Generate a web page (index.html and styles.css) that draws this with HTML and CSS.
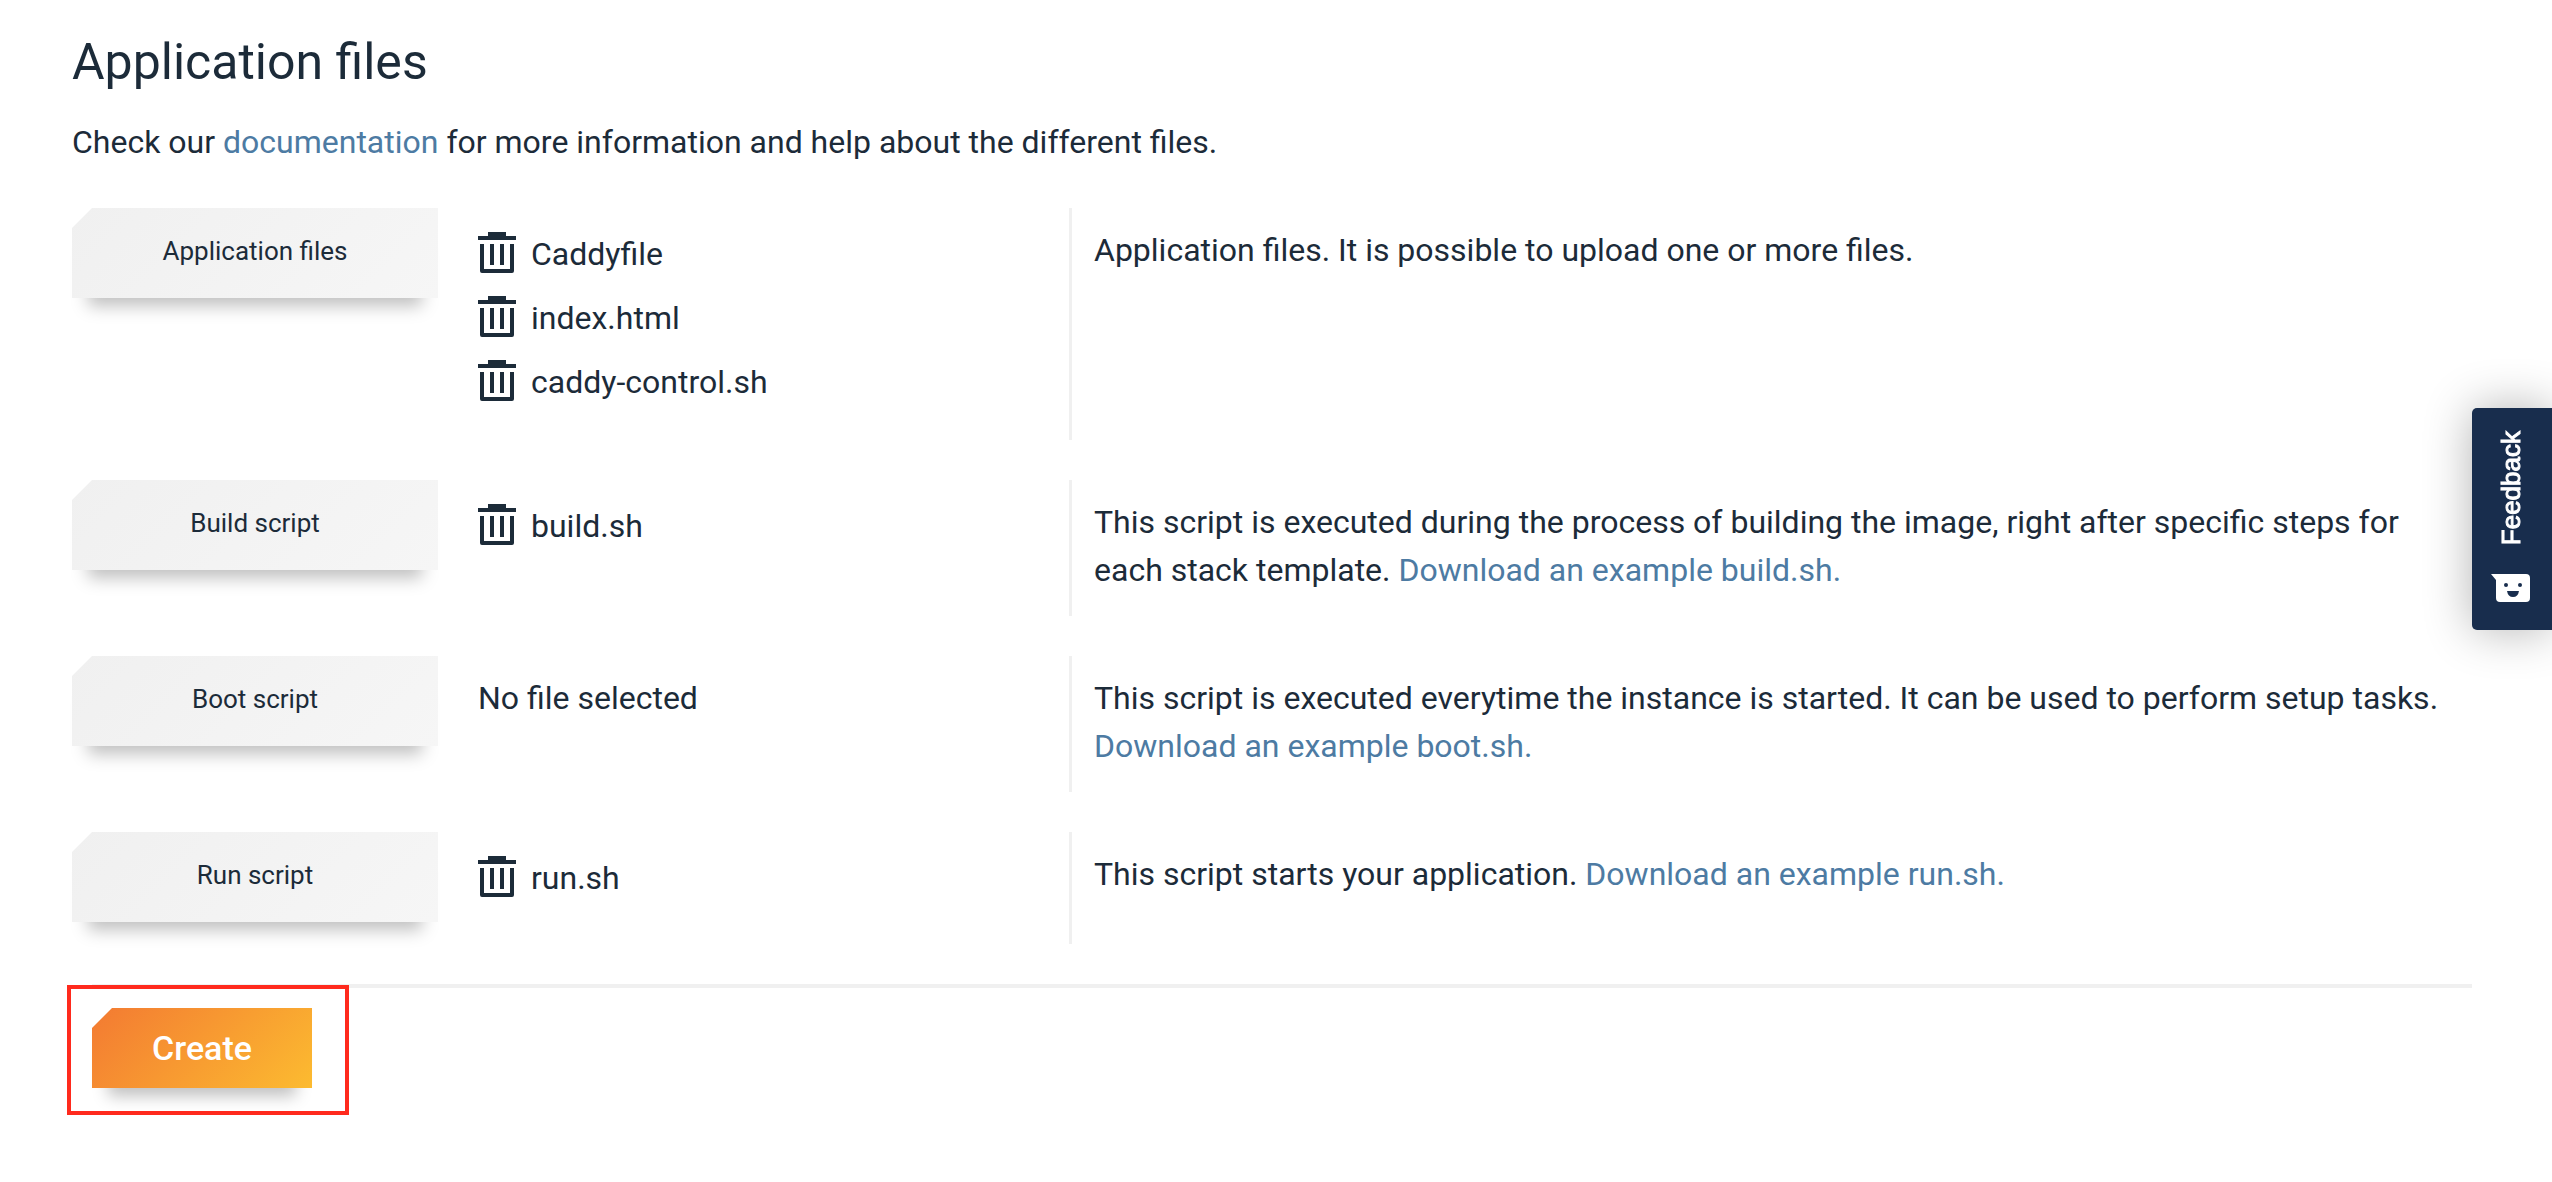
FILE: index.html
```html
<!DOCTYPE html>
<html lang="en">
<head>
<meta charset="utf-8">
<title>Application files</title>
<link rel="stylesheet" href="styles.css">
</head>
<body>
<svg class="sprite" aria-hidden="true">
  <symbol id="trash" viewBox="0 0 38 41">
    <path fill="currentColor" d="M10 0h18v4h10v4H0V4h10zM2 12h4v25h26V12h4v27q0 2-2 2H4q-2 0-2-2zM12 12h4v21h-4zM22 12h4v21h-4z"/>
  </symbol>
</svg>
<main class="page">
  <h1 class="title">Application files</h1>
  <p class="intro">Check our <a href="#docs">documentation</a> for more information and help about the different files.</p>

  <form class="uploads">
    <section class="row">
      <button type="button" class="button upload">Application files</button>
      <ul class="files">
        <li class="file"><button type="button" class="remove" aria-label="Remove Caddyfile"><svg class="icon"><use href="#trash"/></svg></button><span class="name">Caddyfile</span></li>
        <li class="file"><button type="button" class="remove" aria-label="Remove index.html"><svg class="icon"><use href="#trash"/></svg></button><span class="name">index.html</span></li>
        <li class="file"><button type="button" class="remove" aria-label="Remove caddy-control.sh"><svg class="icon"><use href="#trash"/></svg></button><span class="name">caddy-control.sh</span></li>
      </ul>
      <p class="description">Application files. It is possible to upload one or more files.</p>
    </section>
    <section class="row">
      <button type="button" class="button upload">Build script</button>
      <ul class="files">
        <li class="file"><button type="button" class="remove" aria-label="Remove build.sh"><svg class="icon"><use href="#trash"/></svg></button><span class="name">build.sh</span></li>
      </ul>
      <p class="description">This script is executed during the process of building the image, right after specific steps for each stack template. <a href="#build">Download an example build.sh.</a></p>
    </section>
    <section class="row">
      <button type="button" class="button upload">Boot script</button>
      <p class="empty">No file selected</p>
      <p class="description">This script is executed everytime the instance is started. It can be used to perform setup tasks. <a href="#boot">Download an example boot.sh.</a></p>
    </section>
    <section class="row">
      <button type="button" class="button upload">Run script</button>
      <ul class="files">
        <li class="file"><button type="button" class="remove" aria-label="Remove run.sh"><svg class="icon"><use href="#trash"/></svg></button><span class="name">run.sh</span></li>
      </ul>
      <p class="description">This script starts your application. <a href="#run">Download an example run.sh.</a></p>
    </section>
    <footer class="actions">
      <div class="highlight">
        <button type="submit" class="button create">Create</button>
      </div>
    </footer>
  </form>
</main>
<button type="button" class="feedback">
  <span class="feedback-label">Feedback</span>
  <svg class="feedback-icon" viewBox="0 0 40 29" aria-hidden="true">
    <path fill="#fff" d="M0 0h35q4 0 4 4v20q0 4-4 4H9q-4 0-4-4V6z"/>
    <circle cx="15" cy="11" r="2" fill="#182d4d"/>
    <circle cx="29" cy="11" r="2" fill="#182d4d"/>
    <path fill="#182d4d" d="M16 17h12q-1 6-6 6t-6-6z"/>
  </svg>
</button>
</body>
</html>
```

FILE: styles.css
```css
* {
  box-sizing: border-box;
}

body {
  margin: 0;
  background: #fff;
  color: #1c2b39;
  font: 32px/48px Roboto, "Liberation Sans", sans-serif;
}

a {
  color: #4d7ba3;
  text-decoration: none;
}

button {
  border: 0;
  padding: 0;
  background: none;
  color: inherit;
  font: inherit;
  cursor: pointer;
}

.sprite {
  position: absolute;
  width: 0;
  height: 0;
}

.page {
  padding: 30px 80px 64px 72px;
}

.title {
  margin: 0;
  font-size: 50px;
  line-height: 64px;
  font-weight: 400;
}

.intro {
  margin: 24px 0 42px;
}

.uploads {
  display: grid;
  gap: 40px;
}

.row {
  display: grid;
  grid-template-columns: 366px minmax(0, 631fr) minmax(0, 1403fr);
}

.button {
  position: relative;
  z-index: 0;
  box-shadow: 0 24px 16px -16px rgba(0, 0, 0, 0.25);
}

.button::before {
  content: "";
  position: absolute;
  inset: 0;
  z-index: -1;
  clip-path: polygon(20px 0, 100% 0, 100% 100%, 0 100%, 0 20px);
}

.upload {
  height: 90px;
  margin-bottom: 22px;
  padding-bottom: 4px;
  font-size: 26px;
}

.upload::before {
  background: linear-gradient(135deg, #f0f0f0, #f6f6f6);
}

.files {
  margin: 0;
  padding: 12px 0 28px 40px;
  list-style: none;
}

.file {
  display: flex;
  align-items: center;
  gap: 15px;
  height: 64px;
}

.name {
  padding-top: 4px;
}

.remove {
  display: flex;
}

.icon {
  width: 38px;
  height: 41px;
}

.empty {
  margin: 0;
  padding: 18px 40px 22px;
}

.description {
  margin: 0;
  padding: 18px 0 22px 22px;
  border-left: 3px solid #f0f0f0;
}

.actions {
  margin-left: 20px;
  border-top: 4px solid #f0f0f0;
}

.highlight {
  width: 282px;
  margin: -3px 0 0 -25px;
  padding: 19px 21px 23px;
  border: 4px solid #ff2a1d;
}

.create {
  display: block;
  width: 220px;
  height: 80px;
  color: #fff;
  font-size: 34px;
  font-weight: 500;
}

.create::before {
  background: linear-gradient(135deg, #f37a32, #fcbb30);
}

.feedback {
  position: fixed;
  top: 408px;
  right: 0;
  display: flex;
  flex-direction: column;
  align-items: center;
  justify-content: space-between;
  width: 80px;
  height: 222px;
  padding: 23px 2px 27px 0;
  border-radius: 5px 0 0 5px;
  background: #182d4d;
  box-shadow: 0 0 48px rgba(0, 0, 0, 0.3);
  color: #fff;
}

.feedback-label {
  font: 26px/32px "Liberation Sans", sans-serif;
  -webkit-text-stroke: 1px #fff;
  writing-mode: vertical-rl;
  transform: rotate(180deg);
}

.feedback-icon {
  width: 40px;
  height: 29px;
}
```
